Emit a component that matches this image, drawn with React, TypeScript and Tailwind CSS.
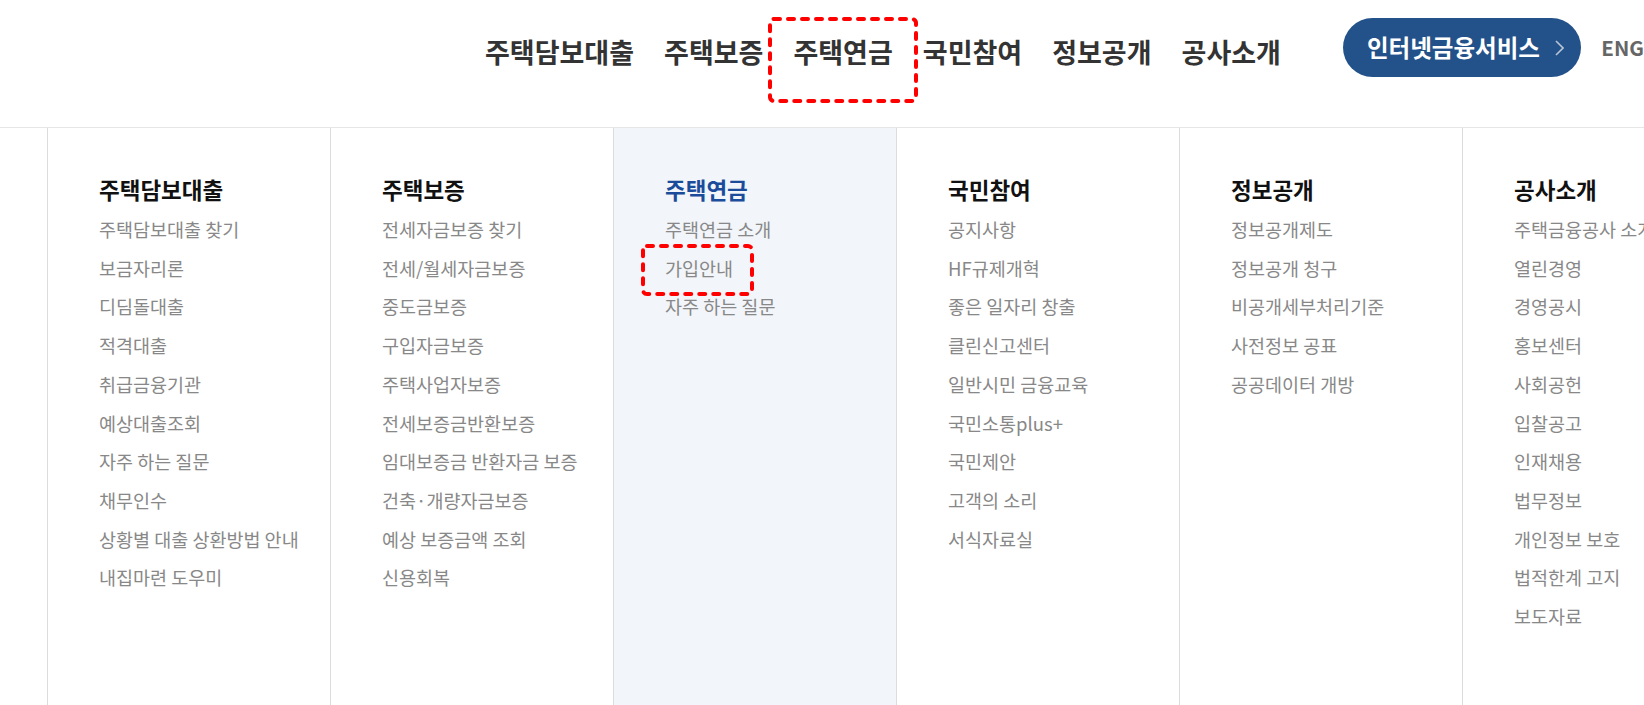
const FONT = { fontFamily: '"Noto Sans CJK KR", "Noto Sans", sans-serif' }

const topMenu = ['주택담보대출', '주택보증', '주택연금', '국민참여', '정보공개', '공사소개']

const columns = [
  {
    title: '주택담보대출',
    items: [
      '주택담보대출 찾기',
      '보금자리론',
      '디딤돌대출',
      '적격대출',
      '취급금융기관',
      '예상대출조회',
      '자주 하는 질문',
      '채무인수',
      '상황별 대출 상환방법 안내',
      '내집마련 도우미',
    ],
  },
  {
    title: '주택보증',
    items: [
      '전세자금보증 찾기',
      '전세/월세자금보증',
      '중도금보증',
      '구입자금보증',
      '주택사업자보증',
      '전세보증금반환보증',
      '임대보증금 반환자금 보증',
      '건축·개량자금보증',
      '예상 보증금액 조회',
      '신용회복',
    ],
  },
  {
    title: '주택연금',
    active: true,
    items: ['주택연금 소개', '가입안내', '자주 하는 질문'],
  },
  {
    title: '국민참여',
    items: [
      '공지사항',
      'HF규제개혁',
      '좋은 일자리 창출',
      '클린신고센터',
      '일반시민 금융교육',
      '국민소통plus+',
      '국민제안',
      '고객의 소리',
      '서식자료실',
    ],
  },
  {
    title: '정보공개',
    items: ['정보공개제도', '정보공개 청구', '비공개세부처리기준', '사전정보 공표', '공공데이터 개방'],
  },
  {
    title: '공사소개',
    items: [
      '주택금융공사 소개',
      '열린경영',
      '경영공시',
      '홍보센터',
      '사회공헌',
      '입찰공고',
      '인재채용',
      '법무정보',
      '개인정보 보호',
      '법적한계 고지',
      '보도자료',
    ],
  },
]

// red dotted annotation box, drawn over the page
function Marker({ x, y, w, h }: { x: number; y: number; w: number; h: number }) {
  return (
    <svg
      className="absolute pointer-events-none"
      style={{ left: x, top: y }}
      width={w}
      height={h}
      viewBox={`0 0 ${w} ${h}`}
    >
      <rect
        x={2}
        y={2}
        width={w - 4}
        height={h - 4}
        rx={4}
        fill="none"
        stroke="#ff0000"
        strokeWidth={4}
        strokeLinecap="round"
        strokeDasharray="6 8"
      />
    </svg>
  )
}

export default function App() {
  return (
    <div className="relative w-[1644px] h-[705px] overflow-hidden bg-white whitespace-nowrap" style={FONT}>
      <header className="h-[128px] border-b border-[#e6e6e6] pt-[18px]">
        <div className="flex items-center h-[59px] pl-[485px]">
          <nav className="flex items-center gap-[30px] mt-[8px]">
            {topMenu.map((m) => (
              <a key={m} className="text-[27px] font-bold text-[#333] leading-none">
                {m}
              </a>
            ))}
          </nav>
          <button className="ml-[62px] w-[241px] h-[59px] rounded-full bg-[#23528a] flex items-center pl-[24px] gap-[15px]">
            <span className="text-[23.5px] font-bold text-white leading-none">인터넷금융서비스</span>
            <svg width="9" height="16" viewBox="0 0 9 16" className="mt-[1px]">
              <polyline points="1,1 8,8 1,15" fill="none" stroke="#b7c4d6" strokeWidth="1.6" />
            </svg>
          </button>
          <span className="ml-[20px] text-[20.5px] font-bold text-[#666] leading-none">ENG</span>
        </div>
      </header>

      <div className="flex h-[577px] pl-[47px]">
        {columns.map((col) => (
          <div
            key={col.title}
            className={`w-[283px] shrink-0 border-l border-[#dcdcdc] pl-[51px] pt-[47px] ${
              col.active ? 'bg-[#f2f5f9]' : ''
            }`}
          >
            <h3
              className={`text-[22.5px] font-bold leading-[28px] ${
                col.active ? 'text-[#1b4c9b]' : 'text-[#111]'
              }`}
            >
              {col.title}
            </h3>
            <ul className="mt-[7px]">
              {col.items.map((item) => (
                <li key={item} className="text-[18.5px] leading-[38.7px] text-[#888]">
                  {item}
                </li>
              ))}
            </ul>
          </div>
        ))}
      </div>

      <Marker x={768} y={17} w={150} h={86} />
      <Marker x={641} y={244} w={113} h={52} />
    </div>
  )
}
